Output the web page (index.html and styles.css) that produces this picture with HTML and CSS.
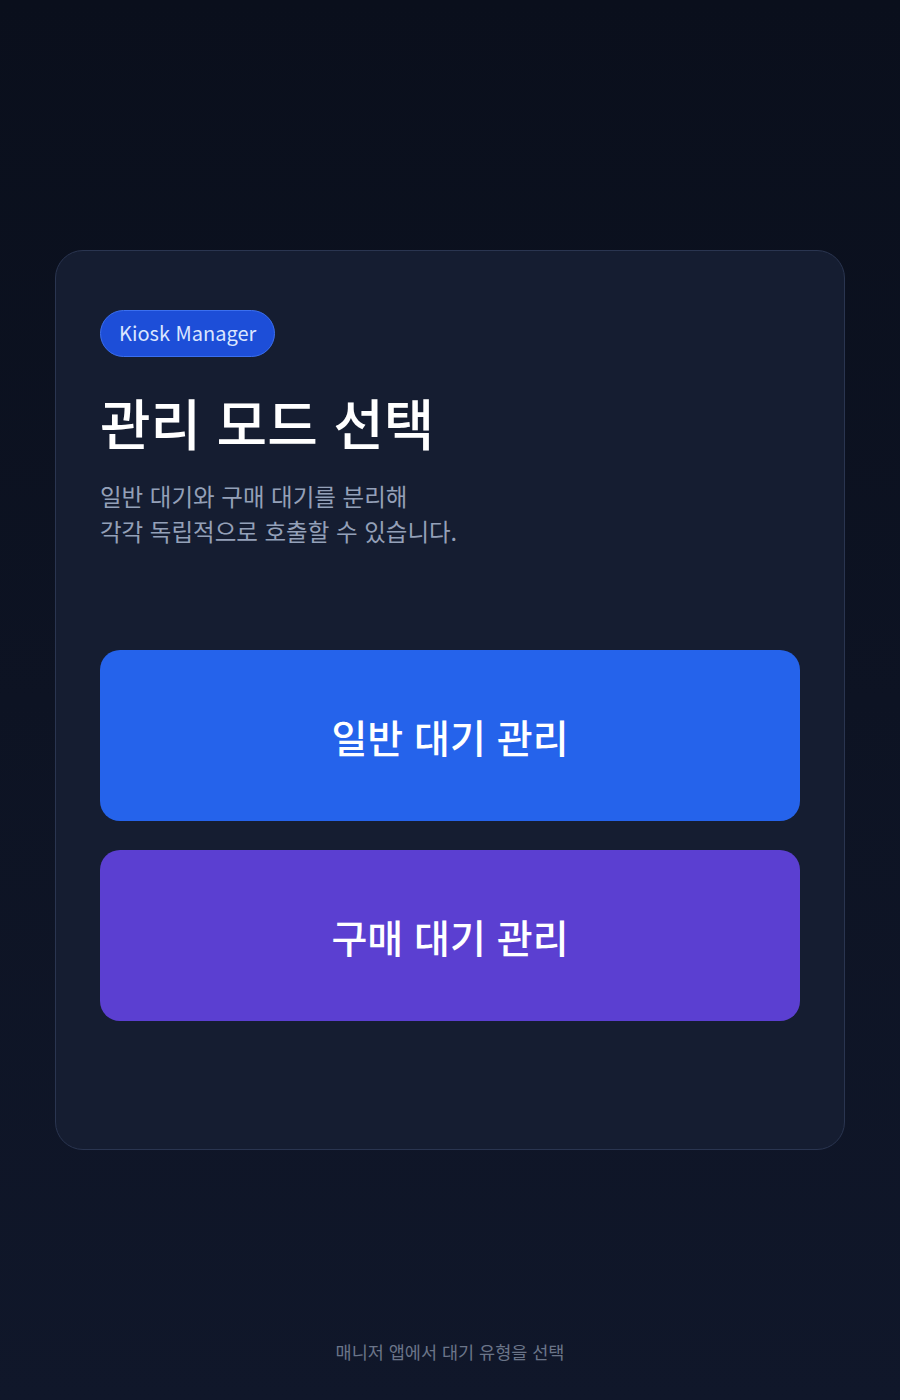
FILE: index.html
```html
<!DOCTYPE html>
<html lang="ko">
  <head>
    <meta charset="utf-8">
    <meta name="viewport" content="width=device-width, initial-scale=1">
    <title>Kiosk Manager</title>
    <link rel="stylesheet" href="styles.css">
  </head>
  <body>
  <div id="spacer"></div>
  <div id="card">
    <span class="badge">Kiosk Manager</span>
    <h1>관리 모드 선택</h1>
    <p class="desc">일반 대기와 구매 대기를 분리해<br>각각 독립적으로 호출할 수 있습니다.</p>
    <div id="modes">
      <button class="mode normal">일반 대기 관리</button>
      <button class="mode purchase">구매 대기 관리</button>
    </div>
  </div>
  <div id="footer">매니저 앱에서 대기 유형을 선택</div>
  </body>
</html>
```

FILE: styles.css
```css
html, body {
  margin: 0;
  padding: 0;
  width: 100%;
  height: 100%;
}

body {
  font-family: "Noto Sans CJK KR", "Noto Sans", sans-serif;
  background: linear-gradient(180deg, #0a0f1c 0%, #10172a 100%);
  color: #fff;
  display: grid;
  grid-template-rows: 1fr auto 1fr;
  justify-items: center;
}

#card {
  box-sizing: border-box;
  width: 790px;
  height: 900px;
  padding: 59px 44px 0;
  background: #151d31;
  border: 1px solid #2a3550;
  border-radius: 28px;
}

.badge {
  display: inline-block;
  box-sizing: border-box;
  height: 47px;
  line-height: 43px;
  padding: 0 18px;
  font-size: 20px;
  color: #dbe6ff;
  background: #1d4ed8;
  border: 1px solid #3b6ff0;
  border-radius: 24px;
}

h1 {
  margin: 28px 0 0;
  font-size: 55px;
  font-weight: 500;
  line-height: 72px;
}

.desc {
  margin: 22px 0 0;
  font-size: 23.5px;
  line-height: 35px;
  color: #94a0b8;
}

#modes {
  margin-top: 101px;
  display: flex;
  flex-direction: column;
  gap: 29px;
}

.mode {
  height: 171px;
  border: none;
  border-radius: 20px;
  font-family: inherit;
  font-size: 39px;
  font-weight: 500;
  color: #fff;
}

.normal {
  background: #2563eb;
}

.purchase {
  background: #5b3fd1;
}

#footer {
  align-self: end;
  padding-bottom: 36px;
  font-size: 17.5px;
  line-height: 24px;
  color: #6b7589;
}
```
